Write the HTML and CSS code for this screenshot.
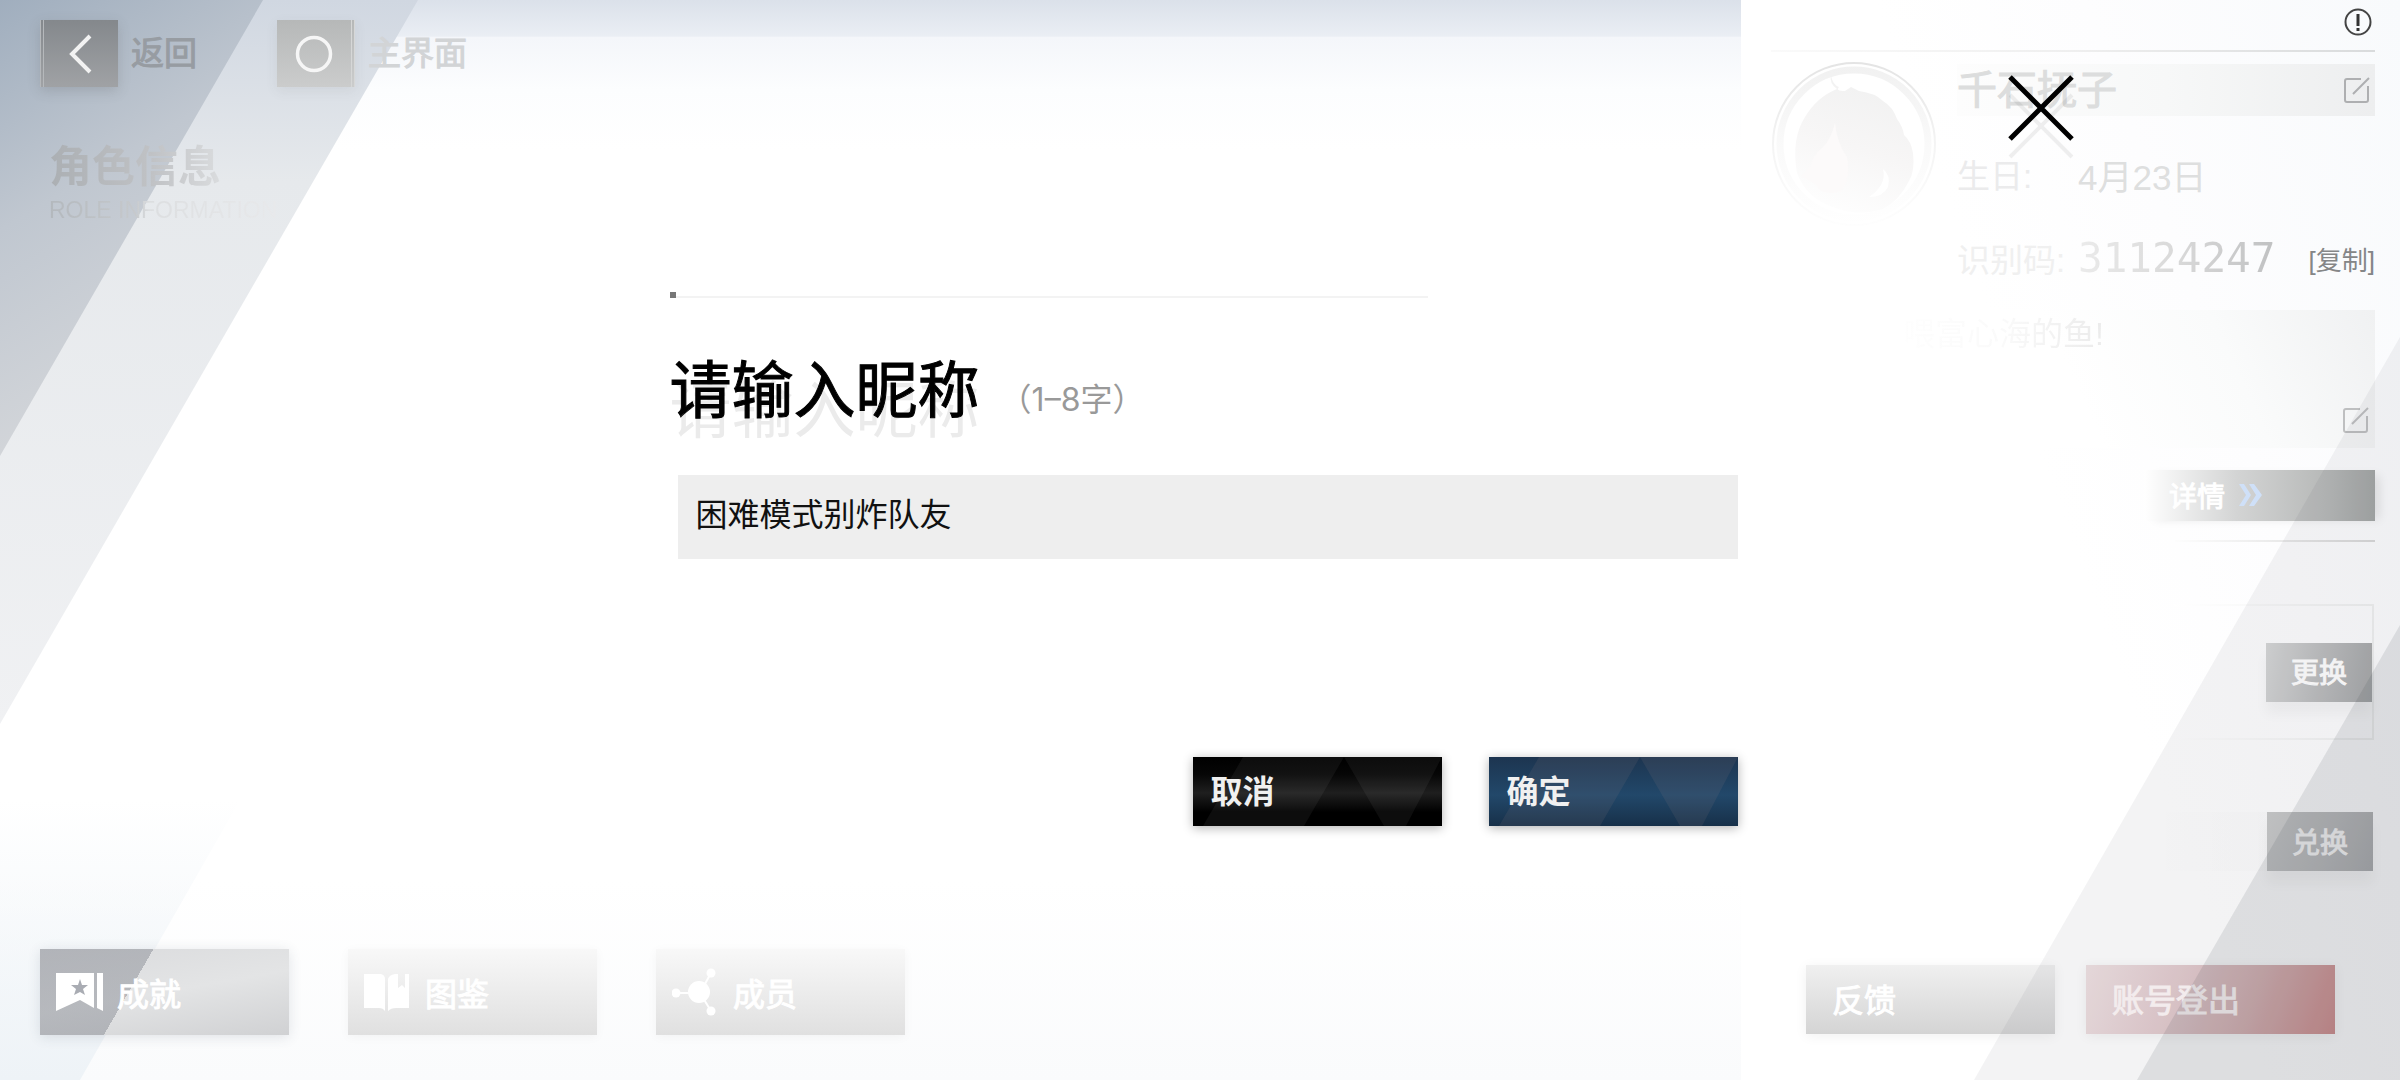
FILE: index.html
```
<!DOCTYPE html>
<html lang="zh-CN">
<head>
    <meta charset="UTF-8">
    <meta name="viewport" content="width=device-width, initial-scale=1.0">
    <title>角色信息</title>
    <link rel="stylesheet" href="styles.css">
</head>
<body>
    <div class="screen">
        <!-- 背景斜带 -->
        <svg class="backdrop" viewBox="0 0 2400 1080" preserveAspectRatio="none" aria-hidden="true">
            <defs>
                <linearGradient id="corner" x1="0" y1="0" x2="0.35" y2="1">
                    <stop offset="0" stop-color="#a0aebe"/>
                    <stop offset="0.45" stop-color="#c0c7d0"/>
                    <stop offset="1" stop-color="#d6d8db"/>
                </linearGradient>
                <linearGradient id="band" x1="0" y1="0" x2="0" y2="1">
                    <stop offset="0" stop-color="#d0d7e1"/>
                    <stop offset="0.25" stop-color="#e6e9ec"/>
                    <stop offset="1" stop-color="#f0f1f3"/>
                </linearGradient>
                <linearGradient id="topGlow" x1="0" y1="0" x2="0" y2="1">
                    <stop offset="0" stop-color="#dbe1ea"/>
                    <stop offset="0.24" stop-color="#eaeef4"/>
                    <stop offset="0.25" stop-color="#f4f6fa"/>
                    <stop offset="0.6" stop-color="#fcfdfe"/>
                    <stop offset="1" stop-color="#ffffff"/>
                </linearGradient>
                <linearGradient id="bottomGlow" x1="0" y1="0" x2="0" y2="1">
                    <stop offset="0" stop-color="#ffffff"/>
                    <stop offset="1" stop-color="#fafbfc"/>
                </linearGradient>
                <linearGradient id="lowLeft" gradientUnits="userSpaceOnUse" x1="0" y1="800" x2="0" y2="1080">
                    <stop offset="0" stop-color="#eef3f7" stop-opacity="0"/>
                    <stop offset="1" stop-color="#eef3f7"/>
                </linearGradient>
            </defs>
            <rect x="0" y="0" width="1741" height="150" fill="url(#topGlow)"/>
            <rect x="0" y="880" width="1741" height="200" fill="url(#bottomGlow)"/>
            <polygon points="0,800 0,1080 80,1080 240,800" fill="url(#lowLeft)"/>
            <polygon points="0,0 418,0 0,724" fill="url(#band)"/>
            <polygon points="0,0 263,0 0,456" fill="url(#corner)"/>
        </svg>

        <main class="main">
            <header class="toolbar">
                <button class="nav-btn nav-back" type="button">
                    <span class="nav-icon">
                        <svg width="26" height="40" viewBox="0 0 26 40"><path d="M22 2 L4 20 L22 38" fill="none" stroke="#f2f2f2" stroke-width="4"/></svg>
                    </span>
                    <span class="nav-text">返回</span>
                </button>
                <button class="nav-btn nav-home" type="button">
                    <span class="nav-icon">
                        <svg width="38" height="38" viewBox="0 0 38 38"><circle cx="19" cy="19" r="16.500" fill="none" stroke="#f6f6f6" stroke-width="3.500"/></svg>
                    </span>
                    <span class="nav-text">主界面</span>
                </button>
            </header>
            <h1 class="page-title">角色信息</h1>
            <p class="page-subtitle">ROLE INFORMATION</p>

            <nav class="tabs">
                <button class="tab tab-achieve" type="button">
                    <svg width="48" height="48" viewBox="0 0 48 48">
                        <path d="M0 5 H38 V40 L24 32 L0 43 Z" fill="#fff"/>
                        <path d="M41 5 H47 V43 L41 40 Z" fill="#fff"/>
                        <path d="M24 11 L26 17 L32 17 L27 21 L29 27 L24 24 L18 27 L20 21 L15 17 L22 17 Z" fill="#a9acb3"/>
                    </svg>
                    成就
                </button>
                <button class="tab" type="button">
                    <svg width="48" height="48" viewBox="0 0 48 48">
                        <path d="M0 6 H17 Q21 7 21 11 V43 Q19 40 15 40 H0 Z" fill="#fff"/>
                        <path d="M24 11 Q25 7 31 6 H34 V20 L38 17 L41 20 V6 H45 V40 H32 Q27 40 24 43 Z" fill="#fff"/>
                    </svg>
                    图鉴
                </button>
                <button class="tab" type="button">
                    <svg width="48" height="48" viewBox="0 0 48 48">
                        <path d="M4 25 H28 L39 5 M28 25 L39 43" fill="none" stroke="#fff" stroke-width="2"/>
                        <circle cx="27" cy="24" r="11" fill="#fff"/>
                        <circle cx="4" cy="25" r="4.500" fill="#fff"/>
                        <circle cx="39" cy="5" r="4.500" fill="#fff"/>
                        <circle cx="39" cy="43" r="4.500" fill="#fff"/>
                    </svg>
                    成员
                </button>
            </nav>
        </main>

        <aside class="panel">
            <div class="panel-top">
                <button class="icon-btn" type="button" aria-label="提示">
                    <svg width="28" height="28" viewBox="0 0 28 28">
                        <circle cx="14" cy="14" r="12.500" fill="none" stroke="#444" stroke-width="2"/>
                        <path d="M14 6 V18 M14 20 V23" stroke="#333" stroke-width="3"/>
                    </svg>
                </button>
            </div>

            <section class="profile">
                <svg class="avatar" width="166" height="166" viewBox="0 0 166 166" aria-hidden="true">
                    <defs>
                        <linearGradient id="ring" x1="0" y1="0" x2="0" y2="1">
                            <stop offset="0" stop-color="#e4e4e4"/>
                            <stop offset="0.5" stop-color="#f4f4f4"/>
                            <stop offset="1" stop-color="#fefefe"/>
                        </linearGradient>
                        <linearGradient id="hair" x1="0.6" y1="0" x2="0.3" y2="1">
                            <stop offset="0" stop-color="#f1f1f1"/>
                            <stop offset="0.5" stop-color="#f7f6f6"/>
                            <stop offset="1" stop-color="#fefefe"/>
                        </linearGradient>
                    </defs>
                    <circle cx="83" cy="83" r="81" fill="none" stroke="url(#ring)" stroke-width="2"/>
                    <circle cx="83" cy="83" r="74" fill="none" stroke="url(#ring)" stroke-width="7" opacity="0.500"/>
                    <path d="M60 15 Q62 24 68 26 Q64 30 74 30 L80 26 L88 30 Q104 32 112 40 Q122 46 126 58 Q132 66 133 74 Q140 80 142 92 Q144 110 138 120 Q128 140 112 148 Q86 156 62 146 Q36 138 26 112 Q20 78 34 56 Q46 36 66 28 Q58 22 60 15 Z" fill="url(#hair)"/>
                    <path d="M64 62 Q60 78 52 86 Q42 94 40 104 L30 116 Q44 120 50 130 Q60 134 70 130 Q80 118 76 96 Q66 82 64 62 Z" fill="#fcfafa"/>
                    <path d="M112 108 Q116 124 98 136 Q112 136 117 126 Q120 114 112 108 Z" fill="#fff"/>
                </svg>
                <div class="profile-info">
                    <div class="name-row">
                        <span class="name">千石抚子</span>
                        <button class="icon-btn" type="button" aria-label="修改昵称">
                            <svg width="28" height="28" viewBox="0 0 28 28"><path d="M18 3 H4 Q2 3 2 5 V24 Q2 26 4 26 H23 Q25 26 25 24 V10 M10 18 L26 2" fill="none" stroke="#aeafb1" stroke-width="2"/></svg>
                        </button>
                    </div>
                    <div class="info-row birthday">
                        <span class="label">生日:</span>
                        <span class="value">4月23日</span>
                    </div>
                    <div class="info-row">
                        <span class="label label-faint">识别码:</span>
                        <span class="code">31124247</span>
                        <button class="copy-btn" type="button">[复制]</button>
                    </div>
                </div>
            </section>

            <section class="bio">
                <p class="bio-text">喂富心海的鱼!</p>
                <button class="icon-btn" type="button" aria-label="修改签名">
                    <svg width="28" height="28" viewBox="0 0 28 28"><path d="M18 3 H4 Q2 3 2 5 V24 Q2 26 4 26 H23 Q25 26 25 24 V10 M10 18 L26 2" fill="none" stroke="#bebfc0" stroke-width="2"/></svg>
                </button>
            </section>

            <button class="detail-btn" type="button">
                详情
                <svg width="26" height="24" viewBox="0 0 26 24"><path d="M2 1 H7 L14 12 L7 23 H2 L9 12 Z M12 1 H17 L25 12 L17 23 H12 L19 12 Z" fill="#cfe0f8"/></svg>
            </button>
            <hr class="rule">

            <section class="swap-box">
                <button class="small-btn" type="button">更换</button>
            </section>
            <section class="redeem">
                <button class="small-btn small-dark" type="button">兑换</button>
            </section>

            <footer class="account">
                <button class="account-btn" type="button">反馈</button>
                <button class="account-btn logout" type="button">账号登出</button>
            </footer>
        </aside>

        <!-- 右下角的斜向阴影 -->
        <svg class="shade" viewBox="0 0 2400 1080" preserveAspectRatio="none" aria-hidden="true">
            <polygon points="2400,337 2400,1080 1974,1080" fill="#32363c" opacity="0.060"/>
            <polygon points="2400,625 2400,1080 2137,1080" fill="#32363c" opacity="0.110"/>
        </svg>

        <!-- 修改昵称弹窗 -->
        <form class="dialog" role="dialog" aria-labelledby="dialogTitle">
            <div class="dialog-line"><span class="dot"></span></div>
            <div class="dialog-head">
                <h2 class="dialog-title" id="dialogTitle"><label for="nickname">请输入昵称</label></h2>
                <span class="hint">（1–8字）</span>
            </div>
            <input class="nickname" id="nickname" type="text" maxlength="8" value="困难模式别炸队友">
            <div class="actions">
                <button class="action cancel" type="button">
                    <svg viewBox="0 0 249 69" preserveAspectRatio="none" aria-hidden="true"><path d="M50 0 H151 L111 69 H10 Z M151 0 H249 L213 69 H191 Z"/></svg>
                    <span>取消</span>
                </button>
                <button class="action confirm" type="button">
                    <svg viewBox="0 0 249 69" preserveAspectRatio="none" aria-hidden="true"><path d="M50 0 H151 L111 69 H10 Z M151 0 H249 L213 69 H191 Z"/></svg>
                    <span>确定</span>
                </button>
            </div>
        </form>
        <button class="close-btn" type="button" aria-label="关闭">
            <svg width="66" height="86" viewBox="0 0 66 86">
                <path d="M2 20 L64 82 M64 20 L2 82" stroke="#000" stroke-width="4" opacity="0.060"/>
                <path d="M2 2 L64 64 M64 2 L2 64" stroke="#000" stroke-width="5"/>
            </svg>
        </button>
    </div>
</body>
</html>
```
FILE: styles.css
```
* {
    box-sizing: border-box;
}
body {
    margin: 0;
    background-color: #fff;
    font-family: "Liberation Sans", "Noto Sans CJK SC", sans-serif;
}
button {
    padding: 0;
    border: none;
    background: none;
    font-family: inherit;
    cursor: pointer;
}
h1, h2, p {
    margin: 0;
    font-weight: 400;
}
.screen {
    position: relative;
    display: flex;
    min-height: 100vh;
    overflow: hidden;
}
.backdrop, .shade {
    position: absolute;
    top: 0;
    left: 0;
    width: 100%;
    height: 100%;
    pointer-events: none;
}

/* 左侧 */
.main {
    position: relative;
    flex: 1;
    display: flex;
    flex-direction: column;
    padding: 20px 40px 45px;
}
.toolbar {
    display: flex;
    gap: 80px;
}
.nav-btn {
    display: flex;
    align-items: center;
    gap: 13px;
    font-size: 33px;
    line-height: 40px;
    color: #979ca2;
    -webkit-text-stroke: 1px currentcolor;
}
.nav-icon {
    display: flex;
    align-items: center;
    justify-content: center;
    width: 78px;
    height: 67px;
    border-left: 4px double #b5b8bb;
    background: linear-gradient(#84888c, #a0a2a5);
    box-shadow: 0 4px 12px rgba(80, 80, 80, 0.2);
}
.nav-home {
    color: #d2d4d6;
}
.nav-home .nav-icon {
    border-left: none;
    border-right: 4px double #d6d7d7;
    background: linear-gradient(#b6b8b8, #cbcccc);
    box-shadow: 0 4px 12px rgba(80, 80, 80, 0.08);
}
.page-title {
    align-self: flex-start;
    margin: 52px 0 0 9px;
    font-size: 43px;
    font-weight: 700;
    line-height: 56px;
    background: linear-gradient(90deg, #abafb3, #c0c2c5 60%, #dadcde);
    background-clip: text;
    -webkit-background-clip: text;
    color: transparent;
}
.page-subtitle {
    align-self: flex-start;
    margin: 1px 0 0 9px;
    font-size: 23px;
    line-height: 28px;
    background: linear-gradient(90deg, #b3b8bd, #c6c9cc 38%, #dcdee0 44%, #e8e9eb);
    background-clip: text;
    -webkit-background-clip: text;
    color: transparent;
}
.tabs {
    display: flex;
    gap: 59px;
    margin-top: auto;
}
.tab {
    display: flex;
    align-items: center;
    gap: 13px;
    width: 249px;
    height: 86px;
    padding-left: 16px;
    font-size: 32px;
    color: #fff;
    -webkit-text-stroke: 1px #fff;
    background: linear-gradient(#f8f8f8, #e0e0e0);
    box-shadow: 0 2px 10px rgba(0, 0, 0, 0.04);
}
.tab-achieve {
    background:
        linear-gradient(120deg, rgba(128, 132, 141, 0.45) 38%, transparent 38%),
        linear-gradient(170deg, #dadbdd, #e3e4e5 50%, #d0d1d3);
    box-shadow: 0 2px 12px rgba(60, 70, 90, 0.14);
}

/* 右侧信息栏 */
.panel {
    position: relative;
    display: flex;
    flex-direction: column;
    width: 659px;
    padding: 0 25px 46px 30px;
    background: linear-gradient(250deg, #f8fafc, #fdfdfe 30%, #fff 50%);
}
.icon-btn {
    display: block;
    height: 28px;
}
.panel-top {
    display: flex;
    justify-content: flex-end;
    height: 52px;
    padding: 8px 3px 0 0;
    border-bottom: 2px solid;
    border-image: linear-gradient(90deg, #fafafa, #efefef 50%, #d9dbdc) 1;
}
.profile {
    display: flex;
    gap: 20px;
    padding-top: 9px;
}
.profile-info {
    flex: 1;
    display: grid;
    gap: 28px;
    grid-template-rows: 52px 60px 52px;
    padding-top: 3px;
}
.name-row {
    display: flex;
    align-items: center;
    justify-content: space-between;
    padding-right: 4px;
    background: linear-gradient(90deg, #fdfdfd, #f7f8f8 50%, #edeeef);
}
.name {
    font-size: 40px;
    line-height: 52px;
    color: #dcdddd;
    -webkit-text-stroke: 1px currentcolor;
}
.info-row {
    display: flex;
    align-items: center;
}
.label {
    width: 121px;
    font-size: 33px;
    color: #ebebec;
}
.label-faint {
    color: #f0f0f0;
}
.value {
    font-size: 35px;
    color: #dedfdf;
}
.code {
    font-family: "DejaVu Sans Mono", monospace;
    font-size: 41px;
    font-weight: 400;
    background: linear-gradient(90deg, #ebebeb, #d9d9d9 50%, #c0c1c2);
    background-clip: text;
    -webkit-background-clip: text;
    color: transparent;
}
.copy-btn {
    margin-left: auto;
    font-size: 26px;
    color: #858687;
}
.bio {
    display: flex;
    justify-content: space-between;
    align-items: flex-end;
    height: 138px;
    margin-top: 26px;
    padding: 4px 5px 14px 132px;
    background: linear-gradient(245deg, #f0f1f2, #fafbfb 25%, #fff 50%);
}
.bio-text {
    align-self: flex-start;
    font-size: 32px;
    line-height: 40px;
    background: linear-gradient(90deg, #fefefe, #fafafa 50%, #ebebeb);
    background-clip: text;
    -webkit-background-clip: text;
    color: transparent;
}
.detail-btn {
    align-self: flex-end;
    display: flex;
    align-items: center;
    gap: 12px;
    width: 231px;
    height: 51px;
    margin-top: 22px;
    padding: 0 0 2px 25px;
    font-size: 28px;
    color: #fff;
    -webkit-text-stroke: 1px #fff;
    background: linear-gradient(90deg, #fff, #d3d4d4 40%, #b6b8b7 80%, #a3a6a5);
    box-shadow: 8px 2px 10px -4px rgba(0, 0, 0, 0.1);
}
.rule {
    align-self: flex-end;
    width: 200px;
    height: 2px;
    margin: 19px 0 62px;
    border: none;
    background: linear-gradient(90deg, #fdfdfd, #d8d8d8);
}
.swap-box {
    align-self: flex-end;
    display: flex;
    justify-content: flex-end;
    align-items: center;
    width: 200px;
    height: 136px;
    margin-right: 1px;
    border: 2px solid;
    border-left: none;
    border-image: linear-gradient(90deg, #fff, #eff0f0) 1;
}
.small-btn {
    width: 106px;
    height: 59px;
    padding-bottom: 2px;
    font-size: 28px;
    color: #fff;
    -webkit-text-stroke: 1px currentcolor;
    background: linear-gradient(100deg, #d6d7d7, #b8b9ba 60%, #a5a7a8);
    box-shadow: 0 12px 12px rgba(0, 0, 0, 0.04);
}
.small-dark {
    background: linear-gradient(110deg, #c8c9c9, #bcbdbe 50%, #adaeb0);
    color: #f6f6f6;
}
.redeem {
    align-self: flex-end;
    display: flex;
    justify-content: flex-end;
    width: 230px;
    margin: 72px 2px 0 0;
    background: linear-gradient(90deg, transparent, rgba(0, 0, 0, 0.02));
}
.account {
    display: flex;
    gap: 31px;
    margin-top: auto;
    padding-left: 35px;
}
.account-btn {
    width: 249px;
    height: 69px;
    padding: 0 0 4px 26px;
    font-size: 32px;
    text-align: left;
    color: #fff;
    -webkit-text-stroke: 1px currentcolor;
    background: linear-gradient(#f0f0f0, #d4d4d4);
    box-shadow: 0 2px 12px rgba(0, 0, 0, 0.06);
}
.logout {
    color: #fff8f8;
    background: linear-gradient(110deg, #efe2e3, #e3cccf 35%, #d8b5b6 65%, #d09090);
}

/* 弹窗 */
.dialog {
    position: absolute;
    top: 0;
    left: 0;
    width: 100%;
    padding: 292px 27.6% 0 27.9%;
}
.dialog-line {
    width: 71%;
    height: 6px;
    background: linear-gradient(#f3f3f3, #f3f3f3) 0 4px / 100% 2px no-repeat;
}
.dot {
    display: block;
    width: 6px;
    height: 6px;
    background-color: #777;
}
.dialog-head {
    display: flex;
    align-items: center;
    gap: 20px;
    height: 88px;
    margin-top: 50px;
}
.dialog-title {
    font-size: 62px;
    line-height: 88px;
    color: #000;
    -webkit-text-stroke: 1px #000;
    text-shadow: 0 20px 0 #ebebeb;
}
.hint {
    padding-top: 16px;
    font-family: Inter, "Noto Sans CJK SC", sans-serif;
    font-size: 32px;
    line-height: 40px;
    color: #999;
}
.nickname {
    display: block;
    width: calc(100% - 8px);
    height: 84px;
    margin: 39px 0 0 8px;
    padding: 0 18px 10px;
    border: none;
    border-radius: 0;
    outline: none;
    font-family: inherit;
    font-size: 32px;
    color: #111;
    background-color: #eee;
}
.actions {
    display: flex;
    justify-content: flex-end;
    gap: 47px;
    margin-top: 198px;
}
.action {
    position: relative;
    width: 249px;
    height: 69px;
    padding: 0 18px 6px;
    font-size: 32px;
    font-weight: 700;
    text-align: left;
    color: #f0f0f0;
    box-shadow: 0 2px 10px rgba(0, 0, 0, 0.3);
}
.action svg {
    position: absolute;
    top: 0;
    left: 0;
    width: 100%;
    height: 100%;
    fill: #fff;
    fill-opacity: 0.05;
}
.action span {
    position: relative;
}
.cancel {
    background: linear-gradient(#000, #060606 25%, #1f1f1f 52%, #000 80%);
}
.confirm {
    background: linear-gradient(#1d3550, #1f3f5e 30%, #22486a 55%, #173049);
}
.confirm svg {
    fill: #a08080;
    fill-opacity: 0.12;
}
.close-btn {
    position: absolute;
    top: 75px;
    right: 326px;
}
```
